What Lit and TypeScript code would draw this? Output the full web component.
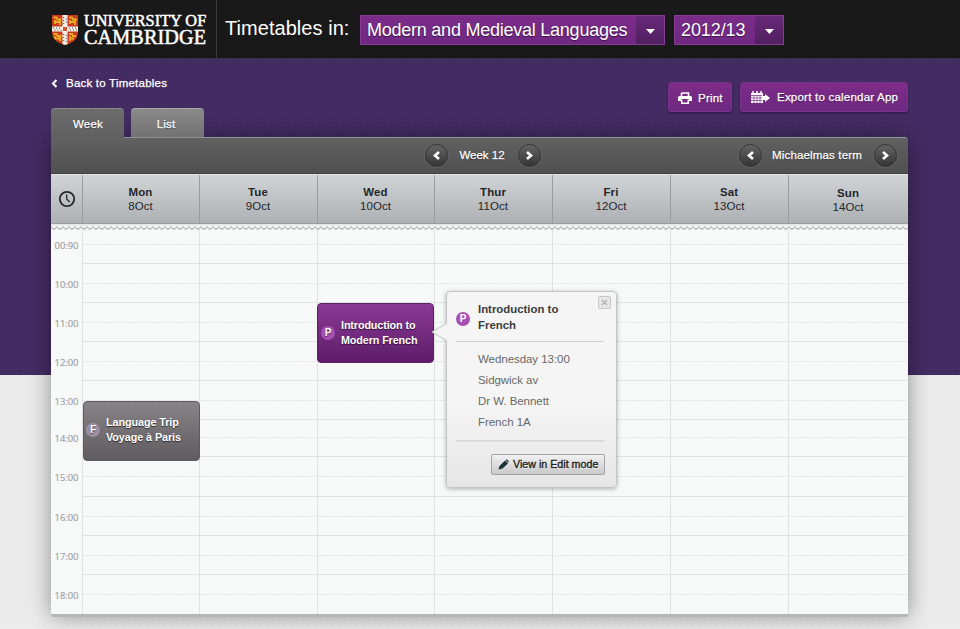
import { LitElement, html, css, svg } from "lit";
import { customElement } from "lit/decorators.js";

const days = [
  ["Mon", "8Oct"], ["Tue", "9Oct"], ["Wed", "10Oct"], ["Thur", "11Oct"],
  ["Fri", "12Oct"], ["Sat", "13Oct"], ["Sun", "14Oct"],
];
const hours = ["00:90", "10:00", "11:00", "12:00", "13:00", "14:00", "15:00", "16:00", "17:00", "18:00"];
const dashed = [244, 283, 322, 361, 400, 437, 476, 516, 555, 594];
const solid = [263, 302, 341, 380, 419, 456, 496, 535, 574];
const columns = [82, 199, 317, 434, 552, 670, 788];
const TOP = 224;

const chevron = (flip = false) => html`<svg width="7" height="9" viewBox="0 0 7 9">
  <path d=${flip ? "M1.5 1 5 4.5 1.5 8" : "M5.5 1 2 4.5 5.5 8"} fill="none" stroke="#fff" stroke-width="2.1"/></svg>`;
const arrow = (flip = false) => html`<svg width="9" height="9" viewBox="0 0 9 9">
  <path d=${flip ? "M2 1 6 4.5 2 8" : "M7 1 3 4.5 7 8"} fill="none" stroke="#fff" stroke-width="2.6"/></svg>`;

@customElement("app-root")
export class AppRoot extends LitElement {
  static styles = css`
    :host { display: block; width: 960px; height: 629px; overflow: hidden; position: relative;
      font-family: "Liberation Sans", Arial, sans-serif; font-size: 11.5px; color: #fff; background: #eaeaea; }
    * { box-sizing: border-box; }
    svg { display: block; flex: none; }
    .backdrop { position: absolute; inset: 0; width: 960px; height: 629px; }
    .header { position: relative; height: 59px; background: #191919; border-bottom: 1px solid #3a3147; display: flex; }
    .logo { width: 217px; height: 58px; border-right: 1px solid #3b3b3b; padding: 12px 0 0 51px; }
    .title { padding: 15px 0 0 8px; width: 143px; font-size: 20px; line-height: 26px; white-space: nowrap; letter-spacing: .05px; }
    .select { height: 30px; margin-top: 15px; background: linear-gradient(#7a2c88, #6f2982); border: 1px solid #853c92;
      display: flex; font-size: 18px; line-height: 28px; white-space: nowrap; text-shadow: 0 1px 1px #3c1248; }
    .faculty { width: 305px; margin-right: 9px; letter-spacing: -.24px; }
    .year { width: 110px; letter-spacing: -.1px; }
    .select span { flex: 1; padding-left: 6px; }
    .select i { width: 28px; background: linear-gradient(#67297a, #51205f); display: flex; align-items: center; justify-content: center; padding-top: 3px; }
    .bar { position: relative; height: 49px; margin: 0 52px 0 51px; display: flex; align-items: flex-start; }
    .back { margin-top: 17px; display: flex; align-items: center; gap: 8px; line-height: 15px; flex: 1; letter-spacing: .22px; }
    .btn { height: 30px; border-radius: 3px; background: linear-gradient(#7d2c89, #6e287f); border: 1px solid #79328a;
      display: flex; align-items: center; box-shadow: 0 1px 2px #2b1743; text-shadow: 0 1px 1px #3c1248; white-space: nowrap; letter-spacing: .22px; }
    .print { width: 64px; margin: 23px 8px 0 0; padding: 1px 0 0 9px; gap: 6px; }
    .export { width: 168px; margin-top: 23px; padding-left: 9px; gap: 6px; }
    .tabs { position: relative; z-index: 1; height: 29px; margin-left: 51px; display: flex; gap: 7px; }
    .tab { width: 73px; height: 29px; border-radius: 4px 4px 0 0; background: linear-gradient(#8a8a8a, #727272); border-top: 1px solid #aaa;
      text-align: center; line-height: 30px; text-shadow: 0 1px 1px #333; padding-right: 3px; letter-spacing: .2px; }
    .tab.active { height: 30px; background: linear-gradient(#6d6d6d, #606060); border-color: #8b8b8b; padding: 0 0 0 1px; }
    .card { position: relative; width: 857px; height: 477px; margin-left: 51px; display: flex; flex-direction: column;
      box-shadow: 0 3px 0 #b5b7b7, 0 2px 22px rgba(0,0,0,.4); border-radius: 0 4px 3px 3px; }
    .toolbar { height: 37px; border-radius: 0 4px 0 0; background: linear-gradient(#616161, #505050); border-top: 1px solid #929292; border-bottom: 1px solid #444;
      display: flex; align-items: center; }
    .nav { display: flex; align-items: center; justify-content: space-between; text-shadow: 0 1px 1px #222; }
    .nav span { margin: -1px 2px 0 0; }
    .week { width: 118px; margin-left: 373px; }
    .term { width: 160px; margin-left: 196px; letter-spacing: .15px; }
    .round { width: 23px; height: 23px; margin: 0 1px; border-radius: 50%; background: linear-gradient(#646464, #353535); border: 1px solid #353535;
      box-shadow: 0 0 0 1px #606060; display: flex; align-items: center; justify-content: center; }
    .days { height: 50px; display: grid; grid-template-columns: 31px 117px 118px 117px 118px 118px 118px 120px; background: linear-gradient(#d0d4d7, #adb1b4);
      border-top: 1px solid #dfe2e4; border-bottom: 1px solid #999da0; color: #252729; line-height: 14px; text-align: center; }
    .day { border-left: 1px solid #989c9f; padding: 10px 1px 0 0; letter-spacing: .1px; }
    .day:last-child { padding-top: 11px; }
    .clock { display: flex; justify-content: center; padding-top: 15px; }
    .sheet { display: block; width: 857px; height: 390px; }
    .hour { font: 9.5px "Open Sans", sans-serif; fill: #a2a4a4; stroke: #a2a4a4; stroke-width: .2px; }
    .event { position: absolute; width: 118px; height: 60px; border-radius: 4px; display: flex; align-items: center; gap: 6px;
      padding-left: 3px; font-size: 10.8px; line-height: 15px; font-weight: bold; text-shadow: 0 1px 1px rgba(0,0,0,.6); white-space: nowrap; }
    .french { left: 266px; top: 166px; width: 117px; background: linear-gradient(#893a94, #5f1c6a); border: 1px solid #572361; letter-spacing: -.12px; padding-bottom: 1px; }
    .trip { left: 32px; top: 264px; width: 117px; background: linear-gradient(#878386, #605b60); border: 1px solid #5e5a5e; padding: 0 0 2px 2px; gap: 6px; letter-spacing: -.08px; }
    .dot { width: 14px; height: 14px; border-radius: 50%; background: #a650b5; display: grid; place-items: center; font-size: 10px; line-height: 14px; font-weight: bold; color: #fff; flex: none; }
    .trip .dot { background: #9d8fa2; }
    .popup { position: absolute; left: 395px; top: 154px; width: 171px; height: 197px; border: 1px solid #c4c4c4; border-radius: 4px;
      background: linear-gradient(#f5f5f5 55%, #e6e6e6); box-shadow: 0 1px 4px rgba(0,0,0,.3); color: #686868; padding: 0 12px 0 9px; }
    .tip { position: absolute; left: -16px; top: 30px; }
    .close { position: absolute; right: 5px; top: 4px; width: 13px; height: 13px; border: 1px solid #c7c7c7; border-radius: 2px; background: #e7e7e7; display: grid; place-items: center; }
    .head { display: flex; gap: 8px; height: 50px; border-bottom: 1px solid #d2d2d2; padding-top: 10px; font-size: 11.4px; line-height: 15.5px; font-weight: bold; color: #3c3c3c; }
    .head .dot { margin-top: 10px; }
    .details { height: 100px; border-bottom: 2px solid #dadada; padding: 7px 0 0 22px; line-height: 21px; letter-spacing: -.05px; }
    .edit { margin: 12px -1px 0 auto; width: 114px; height: 21px; border: 1px solid #a3a3a3; border-radius: 2px; background: linear-gradient(#f1f1f1, #c9c9c9);
      display: flex; align-items: center; gap: 4px; padding: 0 0 1px 6px; color: #222; font-size: 10.7px; text-shadow: 0 1px #fff; white-space: nowrap; -webkit-text-stroke: .35px #222; }
    .med { -webkit-text-stroke: .25px #fff; }
    .word { display: flex; flex-direction: column; font-family: "Liberation Serif", serif; white-space: nowrap; -webkit-text-stroke: .5px #fff; }
    .lockup { display: flex; gap: 6px; }
    .lockup > svg { margin-top: 1px; }
    .univ { font-size: 16.3px; line-height: 17px; letter-spacing: .02px; }
    .camb { font-size: 20.2px; line-height: 17px; letter-spacing: .12px; }
  `;

  render() {
    return html`
      <svg class="backdrop" viewBox="0 0 960 629">
        <defs>
          <pattern id="weave" width="6" height="4" patternUnits="userSpaceOnUse">
            <path d="M0 1 3 2M3 3 6 4" stroke="#341f52" stroke-width=".7" opacity=".35"/><path d="M3 0 6 1" stroke="#553c78" stroke-width=".7" opacity=".3"/>
          </pattern>
          <pattern id="paper" width="6" height="4" patternUnits="userSpaceOnUse"><path d="M0 1 3 2M3 3 6 4" stroke="#e2e2e2" stroke-width=".7"/></pattern>
        </defs>
        <rect width="960" height="629" fill="#ededed"/><rect y="375" width="960" height="254" fill="url(#paper)"/>
        <rect width="960" height="375" fill="#432c63"/><rect width="960" height="375" fill="url(#weave)"/>
      </svg>
      <div class="header">
        <div class="logo"><div class="lockup">
          <svg width="27" height="33" viewBox="0 0 27 33">
            <path d="M1 2H27V19Q27 29 14 32 1 29 1 19Z" fill="#c93a20"/>
            <g fill="none" stroke="#e9ae24" stroke-width="1.8">
              <path d="M2.500 4.500h3l1 2h4M4 7v4M3 9h6M9 6v6M18 4.500h3l1 2h4M19 7v4M18 9h6M24 6v6M2.500 21h3l1 2h4M4 23v3M4 25.500h6M9 22v6M18 21h3l1 2h3M19 23v5M18 25.500h5"/>
            </g>
            <path d="M11.500 2h5v11.500H27v5H16.500V31L14 32l-2.500-1V18.500H1v-5H11.500Z" fill="#f4f0e8"/>
            <path d="M12.700 4v7M15.300 5.500v6M12.700 21v8M15.300 22v7M2 15h8M3.500 17h7M18 15h8M19 17h7" stroke="#4b4540" stroke-width="1" stroke-dasharray="1 2"/>
            <rect x="12" y="14" width="4" height="4" fill="#d65335"/>
          </svg>
          <div class="word"><span class="univ">UNIVERSITY OF</span><span class="camb">CAMBRIDGE</span></div>
        </div></div>
        <div class="title">Timetables in:</div>
        <div class="select faculty"><span>Modern and Medieval Languages</span><i><svg width="9" height="5"><path d="M0 0h9L4.500 5Z" fill="#fff"/></svg></i></div>
        <div class="select year"><span>2012/13</span><i><svg width="9" height="5"><path d="M0 0h9L4.500 5Z" fill="#fff"/></svg></i></div>
      </div>
      <div class="bar">
        <div class="back med">${chevron()}Back to Timetables</div>
        <div class="btn print med">
          <svg width="14" height="12" viewBox="0 0 14 12"><path d="M3.500 1h7v3M3.500 4V1" fill="none" stroke="#fff" stroke-width="1.600"/><path d="M1.500 4h11Q14 4 14 5.500V9h-3V7H3v2H0V5.500Q0 4 1.500 4Z" fill="#fff"/><path d="M3.700 7.500v3.700h6.600V7.500" fill="none" stroke="#fff" stroke-width="1.500"/></svg>Print
        </div>
        <div class="btn export med">
          <svg width="21" height="13" viewBox="0 0 21 13"><path d="M1 2h12v3h2V3l5 4-5 4V9h-2v3H1Z" fill="#fff"/><path d="M3 0v3M7 0v3M11 0v3" stroke="#fff" stroke-width="1.500"/><path d="M1 4.500h11M1 7h11M1 9.500h11M4 4v8M7 4v8M10 4v8" stroke="#7d2c89" stroke-width=".7"/></svg>Export to calendar App
        </div>
      </div>
      <div class="tabs"><div class="tab active med">Week</div><div class="tab med">List</div></div>
      <div class="card">
        <div class="toolbar">
          <div class="nav week med"><div class="round">${arrow()}</div><span>Week 12</span><div class="round">${arrow(true)}</div></div>
          <div class="nav term med"><div class="round">${arrow()}</div><span>Michaelmas term</span><div class="round">${arrow(true)}</div></div>
        </div>
        <div class="days">
          <div class="clock"><svg width="18" height="18" viewBox="0 0 18 18"><circle cx="9" cy="9" r="7.200" fill="none" stroke="#25282a" stroke-width="1.800"/><path d="M8.700 4.500V9l3 3" fill="none" stroke="#25282a" stroke-width="1.300"/></svg></div>
          ${days.map(([name, date]) => html`<div class="day"><b>${name}</b><br>${date}</div>`)}
        </div>
        <svg class="sheet" viewBox="51 224 857 390">
          <defs><pattern id="zig" x="51" y="226" width="6" height="5" patternUnits="userSpaceOnUse"><path d="M0 1 3 3.500 6 1" fill="none" stroke="#b0b2b3" stroke-width="1.200"/></pattern></defs>
          <rect x="51" y=${TOP} width="857" height="390" fill="#f7f9f8"/>
          <rect x="51" y=${TOP} width="857" height="2" fill="#e6e8e8"/>
          ${columns.map((x) => svg`<path d="M${x + 0.5} 230V614" stroke="#dfe2e1"/>`)}
          ${dashed.map((y) => svg`<path d="M83 ${y + 0.5}H908" stroke="#e3e6e5" stroke-dasharray="2 1"/>`)}
          ${solid.map((y) => svg`<path d="M83 ${y + 0.5}H908" stroke="#dfe3e2"/>`)}
          <rect x="51" y="226" width="857" height="5" fill="url(#zig)"/>
          ${hours.map((label, i) => svg`<text class="hour" x="54.5" y=${dashed[i] + 4.5} textLength="24" lengthAdjust="spacingAndGlyphs">${label}</text>`)}
        </svg>
        <div class="event french"><span class="dot">P</span><span>Introduction to<br>Modern French</span></div>
        <div class="event trip"><span class="dot">F</span><span>Language Trip<br>Voyage à Paris</span></div>
        <div class="popup">
          <svg class="tip" width="17" height="20" viewBox="0 0 17 20"><path d="M17 0 1 10 17 20Z" fill="#f5f5f5"/><path d="M16 1 1 10 16 19" fill="none" stroke="#c4c4c4"/></svg>
          <div class="close"><svg width="7" height="7"><path d="M1 1 6 6M6 1 1 6" stroke="#b4b4b4" stroke-width="1.500"/></svg></div>
          <div class="head"><span class="dot">P</span><span>Introduction to<br>French</span></div>
          <div class="details">Wednesday 13:00<br>Sidgwick av<br>Dr W. Bennett<br>French 1A</div>
          <div class="edit"><svg width="11" height="11" viewBox="0 0 11 11"><path d="M.5 10.500 1.500 7 7 1.500 10 4.500 4.500 9.500ZM7.700 1 8.700.2 10.800 2.300 10 3.800Z" fill="#173039"/></svg>View in Edit mode</div>
        </div>
      </div>
    `;
  }
}
